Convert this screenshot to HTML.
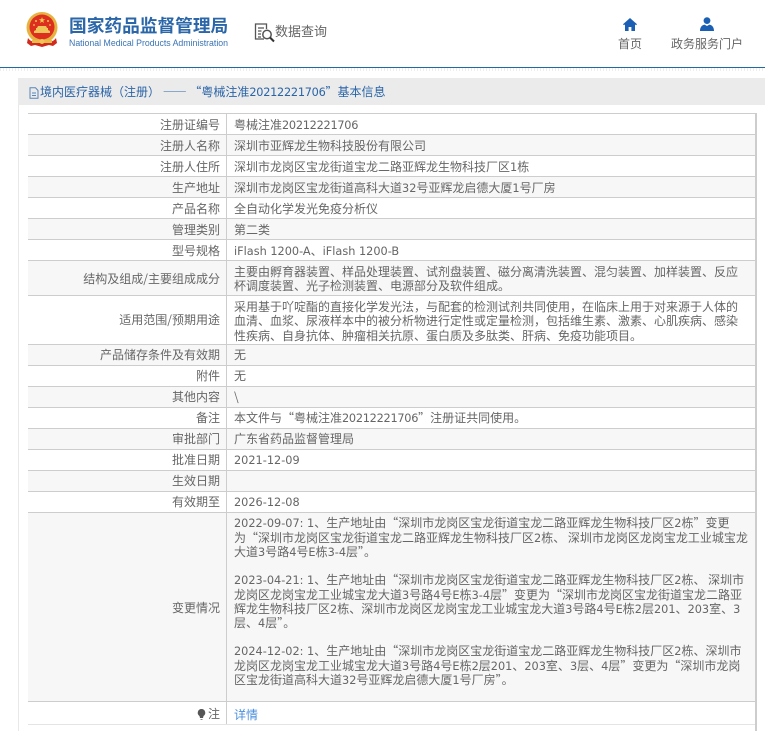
<!DOCTYPE html>
<html lang="zh"><head><meta charset="utf-8"><title>国家药品监督管理局</title>
<style>
html,body{margin:0;padding:0;background:#fff}
body{width:765px;height:731px;overflow:hidden;position:relative;font-family:"Noto Sans CJK SC","Liberation Sans",sans-serif;color:#666;font-size:12px}
div,svg,a{position:absolute}
i{font-style:normal;font-family:"DejaVu Sans",sans-serif;font-size:11.3px;line-height:0}
i.n{letter-spacing:-.27px}
u{text-decoration:none;line-height:0}
.r{left:28px;width:727px;border-top:1px solid #cdcdcd;box-sizing:border-box}
.g{background:#f7f7f7}
.l{left:28px;width:192px;text-align:right;white-space:nowrap;line-height:16px;color:#666}
.v{left:234px;white-space:nowrap;line-height:16px;color:#666}
.m{left:234px;white-space:nowrap;line-height:14.3px;color:#666}
</style></head><body>

<!-- header -->
<svg style="left:25px;top:12px" width="34" height="36" viewBox="0 0 34 36">
<circle cx="17" cy="15.5" r="15.500" fill="#e7b23f"/>
<circle cx="17" cy="15" r="12.500" fill="#dc2f1f"/>
<path d="M17 5l.8 2.300h2.400l-2 1.400.8 2.300-2-1.400-2 1.400.8-2.300-2-1.400h2.400z" fill="#f2c84b"/>
<circle cx="11" cy="9" r="1" fill="#f2c84b"/><circle cx="23" cy="9" r="1" fill="#f2c84b"/><circle cx="9" cy="13" r=".9" fill="#f2c84b"/><circle cx="25" cy="13" r=".9" fill="#f2c84b"/>
<path d="M9 21h16v-2l-2-1v-2h-1l-1-2H13l-1 2h-1v2l-2 1z" fill="#f0c65a"/>
<path d="M3 26c2 3 5 4 8 4l6-2 6 2c3 0 6-1 8-4l1 5-4 3-4-1-7 2-7-2-4 1-4-3z" fill="#d22a1c"/>
<path d="M7 28h20v3H7z" fill="#e9bb4c"/>
<circle cx="17" cy="29.500" r="2.500" fill="#f0c65a"/>
</svg>
<div style="left:69px;top:14px;font-size:17.7px;line-height:22px;font-weight:700;color:#2a66a8;white-space:nowrap">国家药品监督管理局</div>
<div style="left:69px;top:37px;font-family:'Liberation Sans',sans-serif;font-size:8.76px;line-height:12px;color:#3a74b3;white-space:nowrap">National Medical Products Administration</div>

<svg style="left:254px;top:22px" width="22" height="21" viewBox="0 0 22 21" fill="none" stroke="#555" stroke-width="1.3">
<path d="M10 17H1.500V2h11v5"/><path d="M4 6h6M4 9h3.500M4 12h3M4 15h3"/>
<circle cx="13" cy="12.500" r="4.200" stroke-width="1.500"/><path d="M16 15.500l4 4" stroke-width="2" stroke="#333"/>
</svg>
<div style="left:275px;top:21px;font-size:13px;line-height:20px;color:#666;white-space:nowrap">数据查询</div>

<svg style="left:623px;top:18px" width="14" height="13" viewBox="0 0 14 13"><path d="M7 0L0 6.200l1 1 1-.8V13h3.600V9h2.800v4H12V6.400l1 .8 1-1z" fill="#1a5fb4"/></svg>
<div style="left:618px;top:36px;font-size:12px;line-height:16px;color:#666;white-space:nowrap">首页</div>
<svg style="left:700px;top:17px" width="14" height="14" viewBox="0 0 14 14"><circle cx="7" cy="3.600" r="3.400" fill="#1a5fb4"/><path d="M0 14c0-4 2-6 4.600-6.400L7 9l2.400-1.400C12 8 14 10 14 14z" fill="#1a5fb4"/></svg>
<div style="left:671px;top:36px;font-size:12px;line-height:16px;color:#666;white-space:nowrap">政务服务门户</div>

<div style="left:0;top:67px;width:765px;height:1px;background:#1f6aa5"></div>
<div style="left:0;top:68px;width:765px;height:3px;background:repeating-linear-gradient(90deg,#eeeeee 0 1px,#fff 1px 3px)"></div>

<!-- panel -->
<div style="left:18px;top:105px;width:1px;height:626px;background:#e8e8e8"></div>
<div style="left:18px;top:78px;width:747px;height:27px;background:#ebebeb"></div>
<svg style="left:29px;top:87px" width="10" height="12" viewBox="0 0 10 12" fill="none" stroke="#5a86b8" stroke-width="1"><path d="M1 .8h5.500L9 3.500v7.700H1zM3 6h4M3 8.500h4"/></svg>
<div style="left:40px;top:84px;line-height:16px;color:#2a64a8;white-space:nowrap;font-size:12px">境内医疗器械（注册） —— “粤械注准<i class="n">20212221706</i>”基本信息</div>

<!-- table rows -->
<div class="r" style="top:113px;height:21px"></div>
<div class="r g" style="top:134px;height:21px"></div>
<div class="r" style="top:155px;height:21px"></div>
<div class="r g" style="top:176px;height:21px"></div>
<div class="r" style="top:197px;height:21px"></div>
<div class="r g" style="top:218px;height:21px"></div>
<div class="r" style="top:239px;height:21px"></div>
<div class="r g" style="top:260px;height:35px"></div>
<div class="r" style="top:295px;height:49px"></div>
<div class="r g" style="top:344px;height:21px"></div>
<div class="r" style="top:365px;height:21px"></div>
<div class="r g" style="top:386px;height:21px"></div>
<div class="r" style="top:407px;height:21px"></div>
<div class="r g" style="top:428px;height:21px"></div>
<div class="r" style="top:449px;height:21px"></div>
<div class="r g" style="top:470px;height:21px"></div>
<div class="r" style="top:491px;height:21px"></div>
<div class="r g" style="top:512px;height:189px"></div>
<div class="r" style="top:701px;height:23px"></div>
<div style="left:28px;top:724px;width:727px;height:1px;background:#e4e4e4"></div>
<div style="left:226px;top:113px;width:1px;height:611px;background:#cdcdcd"></div>
<div style="left:755px;top:113px;width:2px;height:618px;background:#cdcdcd"></div>

<!-- labels -->
<div class="l" style="top:117px">注册证编号</div>
<div class="l" style="top:138px">注册人名称</div>
<div class="l" style="top:159px">注册人住所</div>
<div class="l" style="top:180px">生产地址</div>
<div class="l" style="top:201px">产品名称</div>
<div class="l" style="top:222px">管理类别</div>
<div class="l" style="top:243px">型号规格</div>
<div class="l" style="top:271px">结构及组成/主要组成成分</div>
<div class="l" style="top:312px">适用范围/预期用途</div>
<div class="l" style="top:347px">产品储存条件及有效期</div>
<div class="l" style="top:368px">附件</div>
<div class="l" style="top:389px">其他内容</div>
<div class="l" style="top:410px">备注</div>
<div class="l" style="top:431px">审批部门</div>
<div class="l" style="top:452px">批准日期</div>
<div class="l" style="top:473px">生效日期</div>
<div class="l" style="top:494px">有效期至</div>
<div class="l" style="top:600px">变更情况</div>
<div class="l" style="top:706px">注</div>
<svg style="left:197px;top:708px" width="9" height="13" viewBox="0 0 9 13"><path d="M4.500 1a3.800 3.800 0 0 1 2 7L6 10H3L2.500 8a3.800 3.800 0 0 1 2-7z" fill="#555"/><path d="M3.500 11h2v1h-2z" fill="#888"/></svg>

<!-- values -->
<div class="v" style="top:117px">粤械注准<i class="n">20212221706</i></div>
<div class="v" style="top:138px">深圳市亚辉龙生物科技股份有限公司</div>
<div class="v" style="top:159px">深圳市龙岗区宝龙街道宝龙二路亚辉龙生物科技厂区<i>1</i>栋</div>
<div class="v" style="top:180px">深圳市龙岗区宝龙街道高科大道<i>32</i>号亚辉龙启德大厦<i>1</i>号厂房</div>
<div class="v" style="top:201px">全自动化学发光免疫分析仪</div>
<div class="v" style="top:222px">第二类</div>
<div class="v" style="top:243px"><i>iFlash 1200-A</i>、<i>iFlash 1200-B</i></div>
<div class="m" style="top:265px">主要由孵育器装置、样品处理装置、试剂盘装置、磁分离清洗装置、混匀装置、加样装置、反应<br>杯调度装置、光子检测装置、电源部分及软件组成。</div>
<div class="m" style="top:300px">采用基于吖啶酯的直接化学发光法，与配套的检测试剂共同使用，在临床上用于对来源于人体的<br>血清、血浆、尿液样本中的被分析物进行定性或定量检测，包括维生素、激素、心肌疾病、感染<br>性疾病、自身抗体、肿瘤相关抗原、蛋白质及多肽类、肝病、免疫功能项目。</div>
<div class="v" style="top:347px">无</div>
<div class="v" style="top:368px">无</div>
<div class="v" style="top:389px">\</div>
<div class="v" style="top:410px">本文件与“粤械注准<i class="n">20212221706</i>”注册证共同使用。</div>
<div class="v" style="top:431px">广东省药品监督管理局</div>
<div class="v" style="top:452px"><i>2021-12-09</i></div>
<div class="v" style="top:494px"><i>2026-12-08</i></div>
<div class="m" style="top:516.4px"><i>2022-09-07: 1</i>、生产地址由“深圳市龙岗区宝龙街道宝龙二路亚辉龙生物科技厂区<i>2</i>栋”变更<br>为“深圳市龙岗区宝龙街道宝龙二路亚辉龙生物科技厂区<i>2</i>栋、 深圳市龙岗区龙岗宝龙工业城宝龙<br>大道<i>3</i>号路<i>4</i>号<i>E</i>栋<i>3-4</i>层”。</div>
<div class="m" style="top:573.4px"><i>2023-04-21: 1</i>、生产地址由“深圳市龙岗区宝龙街道宝龙二路亚辉龙生物科技厂区<i>2</i>栋、 深圳市<br>龙岗区龙岗宝龙工业城宝龙大道<i>3</i>号路<i>4</i>号<i>E</i>栋<i>3-4</i>层”变更为“深圳市龙岗区宝龙街道宝龙二路亚<br>辉龙生物科技厂区<i>2</i>栋、深圳市龙岗区龙岗宝龙工业城宝龙大道<i>3</i>号路<i>4</i>号<i>E</i>栋<i>2</i>层<i>201</i>、<i>203</i>室、<i>3</i><br>层、<i>4</i>层”。</div>
<div class="m" style="top:644.4px"><i>2024-12-02: 1</i>、生产地址由“深圳市龙岗区宝龙街道宝龙二路亚辉龙生物科技厂区<i>2</i>栋、深圳市<br>龙岗区龙岗宝龙工业城宝龙大道<i>3</i>号路<i>4</i>号<i>E</i>栋<i>2</i>层<i>201</i>、<i>203</i>室、<i>3</i>层、<i>4</i>层”变更为“深圳市龙岗<br>区宝龙街道高科大道<i>32</i>号亚辉龙启德大厦<i>1</i>号厂房”。</div>
<div class="v" style="top:707px;color:#4a8fdc">详情</div>
</body></html>
